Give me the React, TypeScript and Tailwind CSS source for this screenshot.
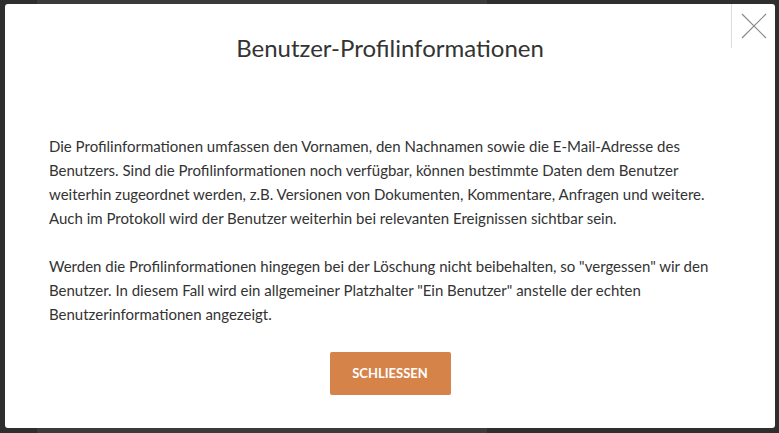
export default function App() {
  return (
    <div
      className="relative h-[433px] w-[779px] overflow-hidden bg-[#2e2e2e]"
      style={{ fontFamily: "Lato, 'Open Sans', sans-serif" }}
    >
      {/* dimmed page behind the dialog */}
      <div className="absolute left-[37px] top-0 h-full w-[450px] bg-[#3b3b3b]" />

      <div className="absolute left-[5px] top-[4px] flex h-[424px] w-[770px] flex-col items-center rounded-[3px] bg-white">
        <button className="absolute right-0 top-0 flex h-[44px] w-[44px] items-center justify-center border-l border-[#dcdcdc]">
          <svg width="26" height="26" viewBox="0 0 26 26" fill="none">
            <path d="M1 1 L25 25 M25 1 L1 25" stroke="#8a8a8a" strokeWidth="1.2" />
          </svg>
        </button>

        <h1 className="mt-[29px] text-[24px] leading-[30px] text-[#333]">
          Benutzer-Profilinformationen
        </h1>

        <div className="mt-[71px] w-full px-[44px] text-[15px] leading-[24px] text-[#333]">
          <p className="mb-[24px]">
            Die Profilinformationen umfassen den Vornamen, den Nachnamen sowie die E-Mail-Adresse des
            Benutzers. Sind die Profilinformationen noch verfügbar, können bestimmte Daten dem Benutzer
            weiterhin zugeordnet werden, z.B. Versionen von Dokumenten, Kommentare, Anfragen und weitere.
            Auch im Protokoll wird der Benutzer weiterhin bei relevanten Ereignissen sichtbar sein.
          </p>
          <p>
            Werden die Profilinformationen hingegen bei der Löschung nicht beibehalten, so "vergessen" wir den
            Benutzer. In diesem Fall wird ein allgemeiner Platzhalter "Ein Benutzer" anstelle der echten
            Benutzerinformationen angezeigt.
          </p>
        </div>

        <button className="mt-[26px] h-[43px] w-[121px] rounded-[2px] bg-[#d6834a] text-[13px] font-bold uppercase text-white">
          Schliessen
        </button>
      </div>
    </div>
  );
}
